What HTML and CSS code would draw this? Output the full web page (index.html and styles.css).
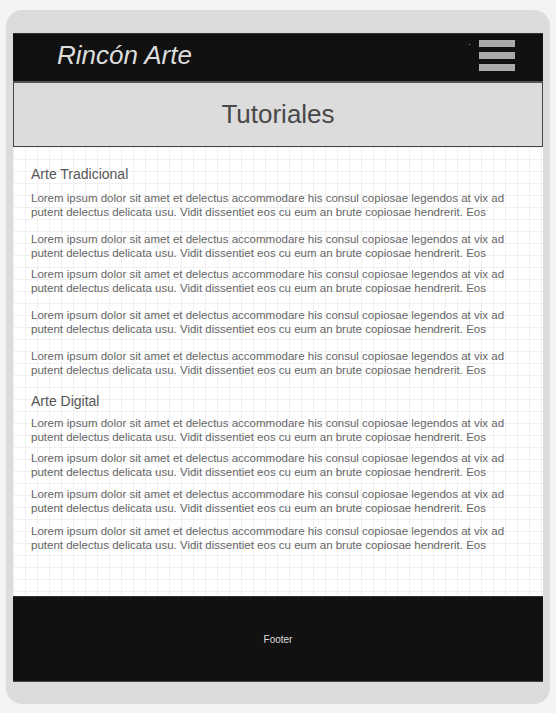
FILE: index.html
```html
<!DOCTYPE html>
<html lang="es">
<head>
<meta charset="utf-8">
<title>Rincón Arte - Tutoriales</title>
<link rel="stylesheet" href="styles.css">
</head>
<body>
<div class="device">
  <div class="screen">
    <header class="topbar">
      <h1 class="brand">Rincón Arte</h1>
      <span class="dot"></span>
      <div class="burger" aria-label="menu">
        <span class="bar"></span>
        <span class="bar"></span>
        <span class="bar"></span>
      </div>
    </header>
    <div class="banner">Tutoriales</div>
    <main class="content">
      <h2 class="sec sec-first">Arte Tradicional</h2>
      <p class="txt m13">Lorem ipsum dolor sit amet et delectus accommodare his consul copiosae legendos at vix ad putent delectus delicata usu. Vidit dissentiet eos cu eum an brute copiosae hendrerit. Eos</p>
      <p class="txt m7">Lorem ipsum dolor sit amet et delectus accommodare his consul copiosae legendos at vix ad putent delectus delicata usu. Vidit dissentiet eos cu eum an brute copiosae hendrerit. Eos</p>
      <p class="txt m13">Lorem ipsum dolor sit amet et delectus accommodare his consul copiosae legendos at vix ad putent delectus delicata usu. Vidit dissentiet eos cu eum an brute copiosae hendrerit. Eos</p>
      <p class="txt m13">Lorem ipsum dolor sit amet et delectus accommodare his consul copiosae legendos at vix ad putent delectus delicata usu. Vidit dissentiet eos cu eum an brute copiosae hendrerit. Eos</p>
      <p class="txt m16">Lorem ipsum dolor sit amet et delectus accommodare his consul copiosae legendos at vix ad putent delectus delicata usu. Vidit dissentiet eos cu eum an brute copiosae hendrerit. Eos</p>
      <h2 class="sec sec-second">Arte Digital</h2>
      <p class="txt m7">Lorem ipsum dolor sit amet et delectus accommodare his consul copiosae legendos at vix ad putent delectus delicata usu. Vidit dissentiet eos cu eum an brute copiosae hendrerit. Eos</p>
      <p class="txt m8">Lorem ipsum dolor sit amet et delectus accommodare his consul copiosae legendos at vix ad putent delectus delicata usu. Vidit dissentiet eos cu eum an brute copiosae hendrerit. Eos</p>
      <p class="txt m9">Lorem ipsum dolor sit amet et delectus accommodare his consul copiosae legendos at vix ad putent delectus delicata usu. Vidit dissentiet eos cu eum an brute copiosae hendrerit. Eos</p>
      <p class="txt">Lorem ipsum dolor sit amet et delectus accommodare his consul copiosae legendos at vix ad putent delectus delicata usu. Vidit dissentiet eos cu eum an brute copiosae hendrerit. Eos</p>
    </main>
    <footer class="foot">Footer</footer>
  </div>
</div>
</body>
</html>
```

FILE: styles.css
```css
html, body {
  margin: 0;
  padding: 0;
}
body {
  background: #f4f4f4;
  font-family: "Liberation Sans", Arial, sans-serif;
  padding: 10px 6px 9px 6px;
}
.device {
  width: 544px;
  height: 694px;
  box-sizing: border-box;
  background: #dcdcdc;
  border-radius: 16px;
  padding: 23px 7px 22px 7px;
}
.screen {
  width: 530px;
  height: 649px;
  display: flex;
  flex-direction: column;
  background: #fff;
}
.topbar {
  position: relative;
  height: 47px;
  flex: none;
  background: #111;
  border-top: 1px solid #333;
  border-bottom: 2px solid #555;
  display: flex;
  align-items: center;
  justify-content: space-between;
  padding: 0 28px 0 44px;
  box-sizing: content-box;
}
.brand {
  margin: 0;
  font-weight: normal;
  font-style: italic;
  font-size: 26px;
  color: #ddd;
  line-height: 30px;
  margin-top: -6px;
}
.dot {
  position: absolute;
  right: 73px;
  top: 10px;
  width: 1px;
  height: 1px;
  background: #999;
}
.burger {
  display: flex;
  flex-direction: column;
  gap: 5px;
  width: 36px;
  margin-top: -4px;
}
.bar {
  display: block;
  height: 7px;
  background: #aaa;
}
.banner {
  flex: none;
  height: 63px;
  background: #dcdcdc;
  border: 1px solid #444;
  border-top: none;
  display: flex;
  align-items: center;
  justify-content: center;
  font-size: 26px;
  color: #484848;
}
.content {
  flex: 1;
  padding: 19px 18px 0 18px;
  background-color: #fff;
  background-image:
    linear-gradient(to right, #f0f0f0 1px, transparent 1px),
    linear-gradient(to bottom, #f0f0f0 1px, transparent 1px);
  background-size: 12px 12px;
  background-position: 0 0;
}
.sec {
  margin: 0 0 9px 0;
  font-weight: normal;
  font-size: 14px;
  line-height: 16px;
  color: #555;
}
.sec-second {
  margin-bottom: 7px;
}
.txt {
  margin: 0;
  font-size: 11.5px;
  line-height: 14px;
  color: #666;
}
.m7 { margin-bottom: 7px; }
.m8 { margin-bottom: 8px; }
.m9 { margin-bottom: 9px; }
.m13 { margin-bottom: 13px; }
.m16 { margin-bottom: 16px; }
.foot {
  flex: none;
  height: 84px;
  background: #111;
  border-top: 1px solid #333;
  border-bottom: 1px solid #444;
  display: flex;
  align-items: center;
  justify-content: center;
  font-size: 10px;
  color: #ddd;
}
```
